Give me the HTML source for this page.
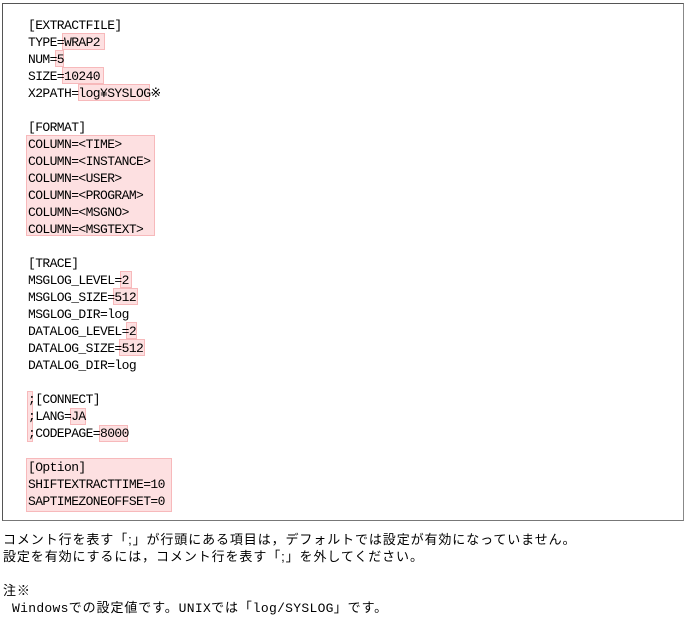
<!DOCTYPE html>
<html><head><meta charset="utf-8"><style>
body{margin:0;width:687px;height:620px;background:#fff;position:relative;overflow:hidden;font-family:"Liberation Mono",monospace;color:#000}
.box{position:absolute;left:2px;top:3px;width:680px;height:516px;border:1px solid #555;border-right-color:#888;border-bottom-color:#777}
.hl{position:absolute;background:#fde0e1;border:1px solid #f7b9bb;box-sizing:border-box}
.ln{position:absolute;left:28px;font-size:13px;line-height:17px;height:17px;white-space:pre;letter-spacing:-0.6px;margin-top:1px}
.jp{position:absolute;left:3px;font-family:"Liberation Sans","Noto Sans CJK JP",sans-serif;font-size:13px;line-height:17px;white-space:pre;letter-spacing:0.9px}
.m{font-family:'Liberation Mono',monospace;letter-spacing:0.3px}
</style></head><body>
<div class="box"></div>
<div class="hl" style="left:62px;top:33px;width:43px;height:17px"></div>
<div class="hl" style="left:55px;top:50px;width:9px;height:17px"></div>
<div class="hl" style="left:62px;top:67px;width:42px;height:17px"></div>
<div class="hl" style="left:78px;top:84px;width:72px;height:17px"></div>
<div class="hl" style="left:26px;top:135px;width:129px;height:101px"></div>
<div class="hl" style="left:120px;top:271px;width:12px;height:17px"></div>
<div class="hl" style="left:113px;top:288px;width:25px;height:17px"></div>
<div class="hl" style="left:126px;top:322px;width:11px;height:17px"></div>
<div class="hl" style="left:119px;top:339px;width:26px;height:17px"></div>
<div class="hl" style="left:27px;top:391px;width:6px;height:51px"></div>
<div class="hl" style="left:70px;top:408px;width:16px;height:17px"></div>
<div class="hl" style="left:99px;top:425px;width:29px;height:17px"></div>
<div class="hl" style="left:26px;top:458px;width:146px;height:54px"></div>

<div class="ln" style="top:16px">[EXTRACTFILE]</div>
<div class="ln" style="top:33px">TYPE=WRAP2</div>
<div class="ln" style="top:50px">NUM=5</div>
<div class="ln" style="top:67px">SIZE=10240</div>
<div class="ln" style="top:84px">X2PATH=log¥SYSLOG※</div>
<div class="ln" style="top:118px">[FORMAT]</div>
<div class="ln" style="top:135px">COLUMN=&lt;TIME&gt;</div>
<div class="ln" style="top:152px">COLUMN=&lt;INSTANCE&gt;</div>
<div class="ln" style="top:169px">COLUMN=&lt;USER&gt;</div>
<div class="ln" style="top:186px">COLUMN=&lt;PROGRAM&gt;</div>
<div class="ln" style="top:203px">COLUMN=&lt;MSGNO&gt;</div>
<div class="ln" style="top:220px">COLUMN=&lt;MSGTEXT&gt;</div>
<div class="ln" style="top:254px">[TRACE]</div>
<div class="ln" style="top:271px">MSGLOG_LEVEL=2</div>
<div class="ln" style="top:288px">MSGLOG_SIZE=512</div>
<div class="ln" style="top:305px">MSGLOG_DIR=log</div>
<div class="ln" style="top:322px">DATALOG_LEVEL=2</div>
<div class="ln" style="top:339px">DATALOG_SIZE=512</div>
<div class="ln" style="top:356px">DATALOG_DIR=log</div>
<div class="ln" style="top:390px">;[CONNECT]</div>
<div class="ln" style="top:407px">;LANG=JA</div>
<div class="ln" style="top:424px">;CODEPAGE=8000</div>
<div class="ln" style="top:458px">[Option]</div>
<div class="ln" style="top:475px">SHIFTEXTRACTTIME=10</div>
<div class="ln" style="top:492px">SAPTIMEZONEOFFSET=0</div>

<div class="jp" style="top:531px">コメント行を表す「;」が行頭にある項目は，デフォルトでは設定が有効になっていません。</div>
<div class="jp" style="top:548px">設定を有効にするには，コメント行を表す「;」を外してください。</div>
<div class="jp" style="top:582px">注※</div>
<div class="jp" style="top:599px">  <span class="m">Windows</span>での設定値です。<span class="m">UNIX</span>では「<span class="m">log/SYSLOG</span>」です。</div>
</body></html>
